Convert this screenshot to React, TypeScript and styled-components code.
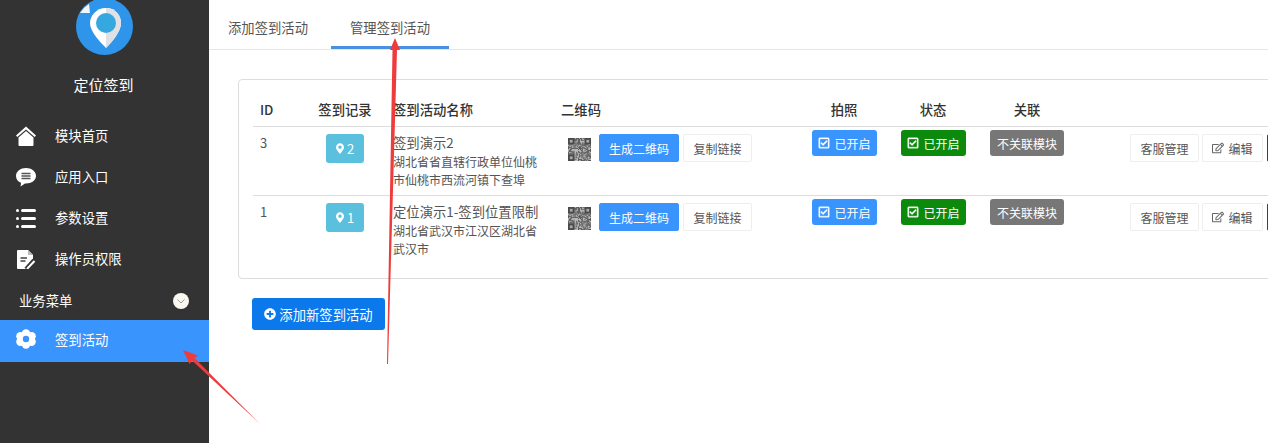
import styled, { createGlobalStyle } from "styled-components";
import { FaMapMarkerAlt, FaRegCheckSquare, FaRegEdit, FaPlusCircle } from "react-icons/fa";

const GlobalStyle = createGlobalStyle`
  html, body {
    margin: 0;
    padding: 0;
    width: 1268px;
    height: 443px;
    overflow: hidden;
    background: #fff;
    font-family: "Noto Sans CJK SC", "Liberation Sans", sans-serif;
    color: #444;
  }
`;

const Page = styled.div`
  position: relative;
  display: flex;
  width: 1268px;
  height: 443px;
  overflow: hidden;
`;

const Sidebar = styled.aside`
  width: 209px;
  flex: none;
  background: #333;
  color: #fff;
`;

const LogoWrap = styled.div`
  display: flex;
  justify-content: center;
  margin-top: -2px;
  height: 57px;
`;

const AppTitle = styled.div`
  margin-top: 19px;
  height: 22px;
  line-height: 22px;
  text-align: center;
  font-size: 15px;
  padding-right: 2px;
`;

const NavList = styled.nav`
  margin-top: 20px;
`;

const NavItem = styled.div<{ $active?: boolean }>`
  display: flex;
  align-items: center;
  height: ${(p) => (p.$active ? "42px" : "41px")};
  box-sizing: border-box;
  padding: 0 0 ${(p) => (p.$active ? "4px" : "2px")} 16px;
  font-size: 13.33px;
  background: ${(p) => (p.$active ? "#3a94fd" : "transparent")};
`;

const NavIcon = styled.span`
  display: flex;
  width: 20px;
  height: 20px;
  margin-right: 19px;
`;

const GroupTitle = styled.div`
  display: flex;
  align-items: center;
  justify-content: space-between;
  height: 40px;
  padding: 0 20px 0 19px;
  box-sizing: border-box;
  font-size: 13.33px;
`;

const Chevron = styled.span`
  display: flex;
  align-items: center;
  justify-content: center;
  width: 16px;
  height: 16px;
  margin-top: 2px;
  border-radius: 50%;
  background: #fbf8f0;
`;

const Main = styled.main`
  flex: 1;
  min-width: 0;
`;

const Tabs = styled.div`
  display: flex;
  height: 50px;
  box-sizing: border-box;
  border-bottom: 1px solid #e6e6e6;
`;

const Tab = styled.div<{ $active?: boolean }>`
  width: 118px;
  height: 49px;
  margin-left: ${(p) => (p.$active ? "4px" : "0")};
  box-sizing: border-box;
  line-height: 56px;
  text-align: center;
  font-size: 13.33px;
  color: #555;
  border-bottom: 3px solid ${(p) => (p.$active ? "#4a90e2" : "transparent")};
`;

const Content = styled.div`
  padding: 29px 0 0 29px;
`;

const Panel = styled.section`
  width: 1100px;
  height: 200px;
  box-sizing: border-box;
  padding: 12px 14px 0;
  border: 1px solid #ddd;
  border-radius: 4px;
`;

const Row = styled.div<{ $head?: boolean }>`
  display: grid;
  grid-template-columns: 54px 76px 170px 252px 78px 100px 88px 1fr;
  height: ${(p) => (p.$head ? "35px" : "69px")};
  box-sizing: border-box;
  border-bottom: 1px solid #ddd;
  font-size: 12px;

  &:last-child {
    border-bottom: 0;
  }
`;

const HeadCell = styled.div<{ $center?: boolean; $pad?: number }>`
  font-size: 13.33px;
  font-weight: 500;
  color: #333;
  line-height: 36px;
  text-align: ${(p) => (p.$center ? "center" : "left")};
  padding-left: ${(p) => p.$pad ?? 0}px;
`;

const IdCell = styled.div`
  padding: 7px 0 0 7px;
  font-size: 13px;
  line-height: 18px;
  color: #555;
`;

const RecordCell = styled.div`
  display: flex;
  justify-content: center;
  padding-top: 7px;
`;

const RecordBadge = styled.span`
  display: flex;
  align-items: center;
  justify-content: center;
  gap: 3px;
  width: 38px;
  height: 29px;
  border-radius: 3px;
  background: #5bc0de;
  color: #fff;
  font-size: 13px;

  svg {
    width: 8px;
    height: 11px;
  }
`;

const NameCell = styled.div`
  width: 146px;
  padding: 7px 0 0 10px;
  line-height: 18.5px;
  color: #555;
`;

const NameTitle = styled.div`
  font-size: 13.33px;
  white-space: nowrap;
`;

const QrCell = styled.div`
  display: flex;
  align-items: flex-start;
  padding: 7px 0 0 15px;
`;

const QrBox = styled.svg`
  width: 23px;
  height: 23px;
  margin: 4px 8px 0 0;
`;

const FlatButton = styled.span<{ $primary?: boolean; $danger?: boolean; $width: number; $gap?: number }>`
  display: flex;
  align-items: center;
  justify-content: center;
  flex: none;
  gap: 4px;
  width: ${(p) => p.$width}px;
  height: 28px;
  margin-left: ${(p) => p.$gap ?? 0}px;
  box-sizing: border-box;
  border-radius: 2px;
  font-size: 12px;
  white-space: nowrap;
  border: 1px solid ${(p) => (p.$primary ? "#3a94fd" : p.$danger ? "#8a1f2d" : "#eee")};
  background: ${(p) => (p.$primary ? "#3a94fd" : p.$danger ? "#8a1f2d" : "#fff")};
  color: ${(p) => (p.$primary || p.$danger ? "#fff" : "#555")};

  svg {
    width: 12px;
    height: 12px;
    color: #666;
  }
`;

const StatusCell = styled.div<{ $offset: number }>`
  display: flex;
  padding: 3px 0 0 ${(p) => p.$offset}px;
`;

const StatusBadge = styled.span<{ $tone: "blue" | "green" | "gray" }>`
  display: flex;
  align-items: center;
  justify-content: center;
  gap: 4px;
  width: ${(p) => (p.$tone === "gray" ? "74px" : "65px")};
  height: 26px;
  border-radius: 3px;
  font-size: 12px;
  white-space: nowrap;
  color: #fff;
  background: ${(p) =>
    p.$tone === "blue" ? "#3a94fd" : p.$tone === "green" ? "#0b8a0b" : "#777"};

  svg {
    width: 12px;
    height: 12px;
    stroke: currentColor;
    stroke-width: 16;
  }
`;

const ActionCell = styled.div`
  display: flex;
  gap: 3px;
  padding: 7px 0 0 59px;
`;

const AddButton = styled.button`
  display: flex;
  align-items: center;
  justify-content: center;
  gap: 3px;
  width: 133px;
  height: 32px;
  margin: 19px 0 0 14px;
  padding: 0;
  border: 0;
  border-radius: 3px;
  background: #0b78ec;
  color: #fff;
  font: inherit;
  font-size: 13.33px;

  svg {
    width: 12px;
    height: 12px;
  }
`;

const ArrowLayer = styled.svg`
  position: absolute;
  left: 0;
  top: 0;
  width: 1268px;
  height: 443px;
  pointer-events: none;
`;

// fixed scatter so it reads as a QR code, same on every render
const qrCells = Array.from({ length: 25 * 25 }, (_, i) => {
  const x = i % 25;
  const y = Math.floor(i / 25);
  const n = Math.sin(x * 12.9898 + y * 78.233) * 43758.5453;
  return { x, y, on: n - Math.floor(n) > 0.5 };
});

const QrCode = () => (
  <QrBox viewBox="0 0 25 25" shapeRendering="geometricPrecision">
    <rect width="25" height="25" fill="#b9b9b9" />
    {qrCells.map((c) =>
      c.on ? <rect key={`${c.x}-${c.y}`} x={c.x} y={c.y} width="1" height="1" fill="#444" /> : null
    )}
    <rect x="0" y="0" width="7" height="7" fill="#4a4a4a" />
    <rect x="18" y="0" width="7" height="7" fill="#4a4a4a" />
    <rect x="0" y="18" width="7" height="7" fill="#4a4a4a" />
    <rect x="2" y="2" width="3" height="3" fill="#aaa" />
    <rect x="20" y="2" width="3" height="3" fill="#aaa" />
    <rect x="2" y="20" width="3" height="3" fill="#aaa" />
  </QrBox>
);

const Logo = () => (
  <svg width="57" height="57" viewBox="0 0 57 57">
    <circle cx="28.5" cy="28.5" r="28.5" fill="#2f95ea" />
    <path d="M4 15 Q8 9 13 6 L14 15 Z" fill="#eef5fb" />
    <path d="M30 10 C20 10 14 18 14 25 C14 34 25 45 30 50 C35 45 45 34 45 25 C45 18 40 10 30 10Z" fill="#fff" />
    <path d="M30 10 C40 10 45 18 45 25 C45 34 35 45 30 50Z" fill="#dfe1e4" />
    <circle cx="30" cy="25" r="10" fill="#35a8e0" />
  </svg>
);

const HomeIcon = () => (
  <svg viewBox="0 0 20 20" fill="#fff">
    <path d="M10 0.5 L0 9.5 L1.3 11 L10 3.4 L18.7 11 L20 9.5Z" />
    <path d="M10 5 L2.5 11.5 V19 Q2.5 20 3.5 20 H16.5 Q17.5 20 17.5 19 V11.5Z" />
  </svg>
);

const ChatIcon = () => (
  <svg viewBox="0 0 20 20">
    <path d="M10 1 C4.5 1 0 4.4 0 9 C0 12.3 2 14.6 5 15.8 L4.6 19.5 L9 16.5 L10 16.5 C15.5 16.5 20 13.4 20 9 C20 4.4 15.5 1 10 1Z" fill="#fff" />
    <path d="M5.5 6.5 H14.5 M5.5 9 H14.5 M5.5 11.5 H14.5" stroke="#555" strokeWidth="1.5" />
  </svg>
);

const ListIcon = () => (
  <svg viewBox="0 0 20 20" fill="#fff">
    <rect x="0" y="1" width="3" height="3" rx="1.5" />
    <rect x="5" y="1" width="15" height="3" rx="1.5" />
    <rect x="0" y="9" width="3" height="3" rx="1.5" />
    <rect x="5" y="9" width="15" height="3" rx="1.5" />
    <rect x="0" y="17" width="3" height="3" rx="1.5" />
    <rect x="5" y="17" width="15" height="3" rx="1.5" />
  </svg>
);

const DocIcon = () => (
  <svg viewBox="0 0 20 20">
    <path d="M2 1 Q1 1 1 2 V19 Q1 20 2 20 H12 L17 10 V6 L12 1Z" fill="#fff" />
    <path d="M12 1 V6 H17Z" fill="#bbb" />
    <path d="M4.5 9 H11 M4.5 12 H9.5" stroke="#444" strokeWidth="1.4" />
    <path d="M10 20 L18 11" stroke="#333" strokeWidth="4" />
    <path d="M11 20 L18.5 12" stroke="#fff" strokeWidth="2" />
  </svg>
);

const GearIcon = () => (
  <svg viewBox="0 0 20 20">
    <g fill="#fff">
      <circle cx="10" cy="4.5" r="4.2" />
      <circle cx="10" cy="15.5" r="4.2" />
      <circle cx="4.4" cy="7.2" r="4.2" />
      <circle cx="15.6" cy="7.2" r="4.2" />
      <circle cx="4.4" cy="12.8" r="4.2" />
      <circle cx="15.6" cy="12.8" r="4.2" />
      <circle cx="10" cy="10" r="6" />
    </g>
    <circle cx="10" cy="10" r="3.2" fill="#3a94fd" />
  </svg>
);

const navItems = [
  { label: "模块首页", icon: <HomeIcon /> },
  { label: "应用入口", icon: <ChatIcon /> },
  { label: "参数设置", icon: <ListIcon /> },
  { label: "操作员权限", icon: <DocIcon /> },
];

const rows = [
  {
    id: 3,
    count: 2,
    name: "签到演示2",
    address: "湖北省省直辖行政单位仙桃市仙桃市西流河镇下查埠",
  },
  {
    id: 1,
    count: 1,
    name: "定位演示1-签到位置限制",
    address: "湖北省武汉市江汉区湖北省武汉市",
  },
];

export default function App() {
  return (
    <Page>
      <GlobalStyle />
      <Sidebar>
        <LogoWrap>
          <Logo />
        </LogoWrap>
        <AppTitle>定位签到</AppTitle>
        <NavList>
          {navItems.map((item) => (
            <NavItem key={item.label}>
              <NavIcon>{item.icon}</NavIcon>
              {item.label}
            </NavItem>
          ))}
          <GroupTitle>
            业务菜单
            <Chevron>
              <svg width="8" height="5" viewBox="0 0 8 5" fill="none" stroke="#999">
                <path d="M0.5 0.5 L4 4 L7.5 0.5" />
              </svg>
            </Chevron>
          </GroupTitle>
          <NavItem $active>
            <NavIcon>
              <GearIcon />
            </NavIcon>
            签到活动
          </NavItem>
        </NavList>
      </Sidebar>
      <Main>
        <Tabs>
          <Tab>添加签到活动</Tab>
          <Tab $active>管理签到活动</Tab>
        </Tabs>
        <Content>
          <Panel>
            <Row $head>
              <HeadCell $pad={7}>ID</HeadCell>
              <HeadCell $center>签到记录</HeadCell>
              <HeadCell $pad={10}>签到活动名称</HeadCell>
              <HeadCell $pad={8}>二维码</HeadCell>
              <HeadCell $center>拍照</HeadCell>
              <HeadCell $center>状态</HeadCell>
              <HeadCell $center>关联</HeadCell>
              <HeadCell />
            </Row>
            {rows.map((row) => (
              <Row key={row.id}>
                <IdCell>{row.id}</IdCell>
                <RecordCell>
                  <RecordBadge>
                    <FaMapMarkerAlt />
                    {row.count}
                  </RecordBadge>
                </RecordCell>
                <NameCell>
                  <NameTitle>{row.name}</NameTitle>
                  {row.address}
                </NameCell>
                <QrCell>
                  <QrCode />
                  <FlatButton $primary $width={80}>
                    生成二维码
                  </FlatButton>
                  <FlatButton $width={69} $gap={4}>
                    复制链接
                  </FlatButton>
                </QrCell>
                <StatusCell $offset={7}>
                  <StatusBadge $tone="blue">
                    <FaRegCheckSquare />
                    已开启
                  </StatusBadge>
                </StatusCell>
                <StatusCell $offset={18}>
                  <StatusBadge $tone="green">
                    <FaRegCheckSquare />
                    已开启
                  </StatusBadge>
                </StatusCell>
                <StatusCell $offset={7}>
                  <StatusBadge $tone="gray">不关联模块</StatusBadge>
                </StatusCell>
                <ActionCell>
                  <FlatButton $width={69}>客服管理</FlatButton>
                  <FlatButton $width={61}>
                    <FaRegEdit />
                    编辑
                  </FlatButton>
                  <FlatButton $danger $width={60} $gap={1} />
                </ActionCell>
              </Row>
            ))}
          </Panel>
          <AddButton>
            <FaPlusCircle />
            添加新签到活动
          </AddButton>
        </Content>
      </Main>
      <ArrowLayer viewBox="0 0 1268 443">
        <path d="M395 38 L400 50 L397 50 L388 364 L387 364 L392.5 50 L390 50Z" fill="#ee3b3b" />
        <path d="M183 350 L198 355.5 L194.5 358 L260 424 L192 360.5 L189.5 364Z" fill="#ee3b3b" />
      </ArrowLayer>
    </Page>
  );
}
